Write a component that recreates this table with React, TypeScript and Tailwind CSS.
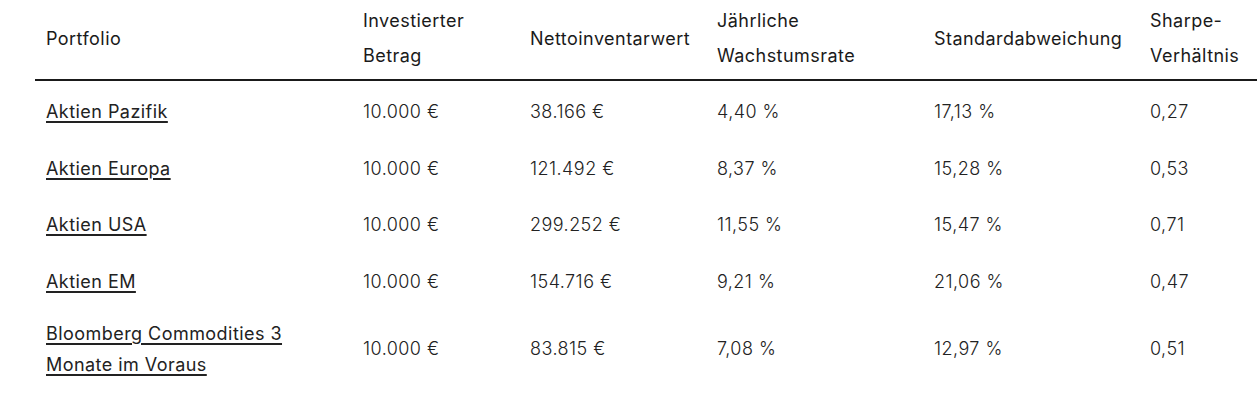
import React from 'react';

const rows = [
  { name: 'Aktien Pazifik', invested: '10.000 €', nav: '38.166 €', cagr: '4,40 %', sd: '17,13 %', sharpe: '0,27' },
  { name: 'Aktien Europa', invested: '10.000 €', nav: '121.492 €', cagr: '8,37 %', sd: '15,28 %', sharpe: '0,53' },
  { name: 'Aktien USA', invested: '10.000 €', nav: '299.252 €', cagr: '11,55 %', sd: '15,47 %', sharpe: '0,71' },
  { name: 'Aktien EM', invested: '10.000 €', nav: '154.716 €', cagr: '9,21 %', sd: '21,06 %', sharpe: '0,47' },
  { name: 'Bloomberg Commodities 3 Monate im Voraus', invested: '10.000 €', nav: '83.815 €', cagr: '7,08 %', sd: '12,97 %', sharpe: '0,51' },
];

const cols = 'grid grid-cols-[317px_167px_187px_217px_216px_1fr]';

export default function App() {
  return (
    <div className="h-[406px] w-[1257px] overflow-hidden bg-white text-[#222] font-['Inter',sans-serif] text-[18px] tracking-[0.025em]">
      <div className="ml-[35px]">
        {/* Header */}
        <div className={`${cols} items-center border-b-2 border-[#1a1a1a] pt-[3px] pb-[6px] leading-[35px] font-normal text-[#1a1a1a]`}>
          <div className="pl-[11px]">Portfolio</div>
          <div className="pl-[11px] pr-4">Investierter Betrag</div>
          <div className="pl-[11px]">Nettoinventarwert</div>
          <div className="pl-[11px] pr-4">Jährliche Wachstumsrate</div>
          <div className="pl-[11px]">Standardabweichung</div>
          <div className="pl-[11px] pr-2">Sharpe-Verhältnis</div>
        </div>
        {/* Body */}
        <div className="pt-[2px] font-light">
          {rows.map((r) => (
            <div key={r.name} className={`${cols} min-h-[56.7px] items-center py-[8px] leading-[31px]`}>
              <div className="pl-[11px]">
                <a href="#" className="block max-w-[262px] font-normal underline decoration-[1.5px] underline-offset-[3px]">{r.name}</a>
              </div>
              <div className="pl-[11px]">{r.invested}</div>
              <div className="pl-[11px]">{r.nav}</div>
              <div className="pl-[11px]">{r.cagr}</div>
              <div className="pl-[11px]">{r.sd}</div>
              <div className="pl-[11px]">{r.sharpe}</div>
            </div>
          ))}
        </div>
      </div>
    </div>
  );
}
